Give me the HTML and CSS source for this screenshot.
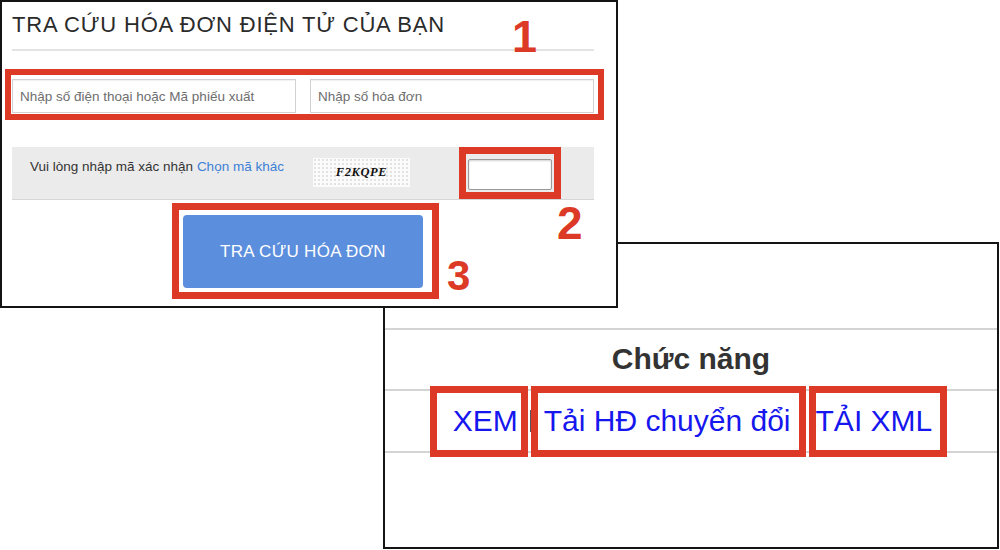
FILE: index.html
```html
<!DOCTYPE html>
<html lang="vi">
<head>
<meta charset="utf-8">
<title>Tra cứu hóa đơn</title>
<link rel="stylesheet" href="styles.css">
</head>
<body>
<div class="stage">
  <section class="win win-actions">
    <div class="fn-table">
      <div class="fn-head">Chức năng</div>
      <div class="fn-row">
        <a class="fn-link" href="#">XEM</a>
        <span class="fn-sep"></span>
        <a class="fn-link" href="#">Tải HĐ chuyển đổi</a>
        <a class="fn-link fn-xml" href="#">TẢI XML</a>
      </div>
    </div>
    <div class="mark mark-xem"></div>
    <div class="mark mark-tai"></div>
    <div class="mark mark-xml"></div>
  </section>

  <section class="win win-lookup">
    <h1 class="title">TRA CỨU HÓA ĐƠN ĐIỆN TỬ CỦA BẠN</h1>
    <div class="fields">
      <input class="field" type="text" placeholder="Nhập số điện thoại hoặc Mã phiếu xuất">
      <input class="field" type="text" placeholder="Nhập số hóa đơn">
    </div>
    <div class="captcha">
      <p class="captcha-text">Vui lòng nhập mã xác nhận <a class="captcha-link" href="#">Chọn mã khác</a></p>
      <div class="captcha-img">F2KQPE</div>
      <input class="captcha-input" type="text">
    </div>
    <div class="submit-row">
      <button class="submit" type="button">TRA CỨU HÓA ĐƠN</button>
    </div>
    <div class="mark mark-1"></div>
    <div class="mark mark-2"></div>
    <div class="mark mark-3"></div>
    <span class="num num-1">1</span>
    <span class="num num-2">2</span>
    <span class="num num-3">3</span>
  </section>
</div>
</body>
</html>
```

FILE: styles.css
```css
* { box-sizing: border-box; }

html, body {
  margin: 0;
  padding: 0;
  background: #ffffff;
}

body {
  font-family: "Liberation Sans", Arial, Helvetica, sans-serif;
  color: #333;
}

.stage {
  position: relative;
  width: 1000px;
  height: 550px;
  overflow: hidden;
}

/* windows (two pasted screenshots on a canvas) */
.win {
  position: absolute;
  background: #fff;
  border: 2px solid #141414;
}

.win-lookup {
  left: 0;
  top: 0;
  width: 618px;
  height: 308px;
  padding: 10px 22px 0 10px;
  z-index: 2;
}

.win-actions {
  left: 383px;
  top: 242px;
  width: 616px;
  height: 307px;
  z-index: 1;
}

/* lookup window */
.title {
  margin: 0;
  font-size: 22px;
  line-height: 26px;
  font-weight: normal;
  color: #2b2b2b;
  letter-spacing: 0.8px;
  padding-bottom: 11px;
  border-bottom: 2px solid #e3e3e3;
}

.fields {
  display: flex;
  gap: 14px;
  margin-top: 28px;
}

.field {
  flex: 1;
  height: 34px;
  border: 1px solid #d2d2d2;
  box-shadow: inset 0 1px 1px rgba(0,0,0,0.06);
  padding: 0 7px;
  font-family: "Liberation Sans", Arial, sans-serif;
  font-size: 13.5px;
  color: #333;
  background: #fff;
  outline: none;
}

.field::placeholder { color: #6e6e6e; }

.captcha {
  display: flex;
  align-items: flex-start;
  height: 53px;
  margin-top: 34px;
  padding: 11px 0 0 18px;
  background: #ebebeb;
  border-bottom: 1px solid #d6d6d6;
}

.captcha-text {
  margin: 1px 0 0 0;
  width: 283px;
  font-size: 13.5px;
  line-height: 16px;
  color: #333;
}

.captcha-link {
  color: #3d80d6;
  text-decoration: none;
}

.captcha-img {
  width: 97px;
  height: 29px;
  background-color: #fbfbfb;
  background-image: radial-gradient(circle, #e2e2e2 0.8px, transparent 1.2px);
  background-size: 4px 4px;
  display: flex;
  align-items: center;
  justify-content: center;
  font-family: "Liberation Serif", "Times New Roman", serif;
  font-weight: bold;
  font-style: italic;
  font-size: 12.5px;
  letter-spacing: 0.6px;
  color: #111;
}

.captcha-input {
  margin: 1px 0 0 58px;
  width: 84px;
  height: 31px;
  border: 1px solid #9a9a9a;
  border-radius: 2px;
  box-shadow: inset 0 1px 2px rgba(0,0,0,0.18);
  background: #fff;
  outline: none;
}

.submit-row {
  display: flex;
  justify-content: center;
  margin-top: 15px;
}

.submit {
  width: 240px;
  height: 73px;
  border: none;
  border-radius: 4px;
  background: #5b8edc;
  color: #fff;
  font-family: "Liberation Sans", Arial, sans-serif;
  font-size: 17px;
  letter-spacing: 0.3px;
  cursor: pointer;
}

/* annotation marks */
.mark {
  position: absolute;
  border: 7px solid #dc3a27;
  pointer-events: none;
}

.mark-1 { left: 3px; top: 67px; width: 599px; height: 51px; border-width: 6px; }
.mark-2 { left: 457px; top: 145px; width: 102px; height: 52px; }
.mark-3 { left: 170px; top: 201px; width: 267px; height: 96px; }

.num {
  position: absolute;
  font-family: "Liberation Sans", Arial, sans-serif;
  font-weight: bold;
  color: #dc3a27;
  line-height: 1;
}

.num-1 { left: 510px; top: 12px; font-size: 45px; }
.num-2 { left: 555px; top: 198px; font-size: 46px; }
.num-3 { left: 445px; top: 253px; font-size: 42px; }

/* actions window */
.fn-table {
  margin-top: 84px;
  border-top: 2px solid #d4d4d4;
}

.fn-head {
  height: 61px;
  display: flex;
  align-items: center;
  justify-content: center;
  border-bottom: 2px solid #d4d4d4;
  font-size: 30px;
  font-weight: bold;
  color: #333;
  padding-bottom: 2px;
}

.fn-row {
  height: 62px;
  display: flex;
  align-items: center;
  justify-content: center;
  border-bottom: 2px solid #d4d4d4;
  padding-left: 3px;
}

.fn-link {
  font-size: 30px;
  color: #1616ee;
  text-decoration: none;
  margin: 0 12px;
}

.fn-xml { margin-left: 13px; }

.fn-sep {
  width: 2px;
  height: 22px;
  background: #555;
}

.mark-xem { left: 45px; top: 142px; width: 98px; height: 71px; }
.mark-tai { left: 146px; top: 142px; width: 275px; height: 71px; }
.mark-xml { left: 424px; top: 142px; width: 138px; height: 71px; }
```
